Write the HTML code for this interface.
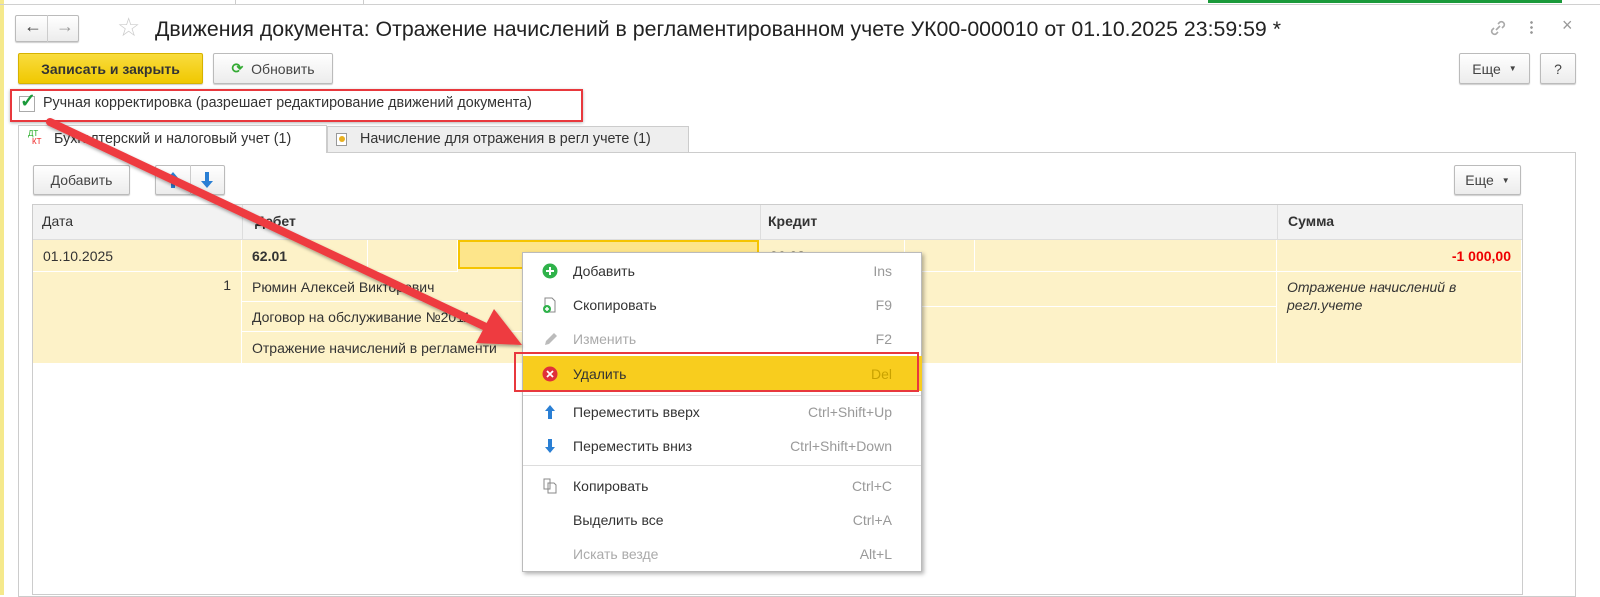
<!DOCTYPE html>
<html><head><meta charset="utf-8"><style>
*{box-sizing:border-box;margin:0;padding:0}
body{width:1600px;height:595px;background:#fff;font-family:"Liberation Sans",sans-serif;font-size:14px;color:#333;position:relative;overflow:hidden}
.a{position:absolute}
.btn{position:absolute;border:1px solid #bbb;border-radius:2px;background:linear-gradient(#fff,#ececec);box-shadow:0 1px 1px rgba(0,0,0,.2);font-size:14px;color:#444;display:flex;align-items:center;justify-content:center}
.cell{position:absolute;border-right:1px solid #fff;border-bottom:1px solid #fff;padding:0 10px;display:flex;align-items:center;font-size:14px;color:#333}
.mi{position:absolute;left:0;width:399px;height:34px;display:flex;align-items:center;font-size:14px;color:#333}
.mi .t{position:absolute;left:50px}
.mi .k{position:absolute;right:30px;color:#999}
.mi .ic{position:absolute;left:19px;width:16px;height:16px}
</style></head><body>
<div class="a" style="left:0;top:0;width:4px;height:595px;background:#f5e98c"></div>
<div class="a" style="left:0;top:4px;width:1600px;height:1px;background:#d0d0d0"></div>
<div class="a" style="left:235px;top:0;width:1px;height:4px;background:#ccc"></div>
<div class="a" style="left:363px;top:0;width:1px;height:4px;background:#ccc"></div>
<div class="a" style="left:1208px;top:0;width:354px;height:3px;background:#1a9a3a"></div>

<div class="btn" style="left:15px;top:15px;width:64px;height:27px"></div>
<div class="a" style="left:24px;top:16px;font-size:18px;color:#444">&larr;</div>
<div class="a" style="left:47px;top:15px;width:1px;height:27px;background:#ccc"></div>
<div class="a" style="left:56px;top:16px;font-size:18px;color:#999">&rarr;</div>
<div class="a" style="left:117px;top:12px;font-size:26px;color:#ccc">&#9734;</div>
<div class="a" style="left:155px;top:17px;font-size:21.3px;color:#222;white-space:nowrap">Движения документа: Отражение начислений в регламентированном учете УК00-000010 от 01.10.2025 23:59:59 *</div>
<svg class="a" style="left:1487px;top:17px" width="22" height="22" viewBox="0 0 22 22"><path d="M9 13l4-4M7 11l-2 2a3 3 0 004 4l2-2M15 11l2-2a3 3 0 00-4-4l-2 2" stroke="#aaa" stroke-width="1.6" fill="none"/></svg>
<div class="a" style="left:1530px;top:20px;width:3px;height:14px;background:radial-gradient(circle,#999 1.2px,transparent 1.5px) 0 0/3px 5px"></div>
<div class="a" style="left:1562px;top:15px;font-size:18px;color:#999">×</div>

<div class="btn" style="left:18px;top:53px;width:185px;height:31px;background:linear-gradient(#f9dc3e,#f0c800);border-color:#d6b200;font-weight:bold;color:#333">Записать и закрыть</div>
<div class="btn" style="left:213px;top:53px;width:120px;height:31px"><span style="color:#3a3;font-weight:bold;margin-right:8px">&#10227;</span>Обновить</div>
<div class="btn" style="left:1459px;top:53px;width:71px;height:31px">Еще <span style="font-size:8px;margin-left:8px">▼</span></div>
<div class="btn" style="left:1540px;top:53px;width:36px;height:31px">?</div>

<div class="a" style="left:10px;top:89px;width:573px;height:33px;border:2px solid #e8383d;box-shadow:0 1px 3px rgba(0,0,0,.3)"></div>
<div class="a" style="left:19px;top:96px;width:16px;height:16px;border:1px solid #aaa;background:#fff"></div>
<div class="a" style="left:20px;top:90px;font-size:19px;color:#1a9a3a;font-weight:bold">✓</div>
<div class="a" style="left:43px;top:95px;font-size:14.3px;color:#333">Ручная корректировка (разрешает редактирование движений документа)</div>

<div class="a" style="left:18px;top:152px;width:1558px;height:445px;border:1px solid #ccc"></div>
<div class="a" style="left:18px;top:125px;width:309px;height:28px;border:1px solid #ccc;border-bottom:none;background:#fff"></div>
<div class="a" style="left:28px;top:130px;font-size:8px;color:#2a2;line-height:8px">ДТ<br><span style="color:#e22;margin-left:4px">КТ</span></div>
<div class="a" style="left:54px;top:131px;font-size:14.3px">Бухгалтерский и налоговый учет (1)</div>
<div class="a" style="left:327px;top:126px;width:362px;height:27px;border:1px solid #ccc;background:#eee"></div>
<div class="a" style="left:336px;top:133px;width:11px;height:13px;border:1px solid #999;background:#fff"><div style="margin:2px;width:6px;height:6px;border-radius:50%;background:#e8b020"></div></div>
<div class="a" style="left:360px;top:131px;font-size:14.3px">Начисление для отражения в регл учете (1)</div>

<div class="btn" style="left:33px;top:165px;width:97px;height:30px">Добавить</div>
<div class="btn" style="left:155px;top:165px;width:70px;height:30px"></div>
<div class="a" style="left:190px;top:165px;width:1px;height:30px;background:#ccc"></div>
<svg class="a" style="left:166px;top:171px" width="14" height="18" viewBox="0 0 14 18"><path d="M7 1l6 7H9v9H5V8H1z" fill="#2a7fd4"/></svg>
<svg class="a" style="left:200px;top:171px" width="14" height="18" viewBox="0 0 14 18"><path d="M7 17l6-7H9V1H5v9H1z" fill="#2a7fd4"/></svg>
<div class="btn" style="left:1454px;top:165px;width:67px;height:30px">Еще <span style="font-size:8px;margin-left:8px">▼</span></div>

<div class="a" style="left:32px;top:204px;width:1491px;height:391px;border:1px solid #ccc"></div>
<div class="a" style="left:33px;top:205px;width:1489px;height:35px;background:#f2f2f2;border-bottom:1px solid #ddd"></div>
<div class="a" style="left:42px;top:213px">Дата</div>
<div class="a" style="left:242px;top:205px;width:1px;height:35px;background:#ddd"></div>
<div class="a" style="left:255px;top:213px;font-weight:bold">Дебет</div>
<div class="a" style="left:760px;top:205px;width:1px;height:35px;background:#ddd"></div>
<div class="a" style="left:768px;top:213px;font-weight:bold">Кредит</div>
<div class="a" style="left:1277px;top:205px;width:1px;height:35px;background:#ddd"></div>
<div class="a" style="left:1288px;top:213px;font-weight:bold">Сумма</div>

<div class="a" style="left:33px;top:240px;width:1489px;height:124px;background:#fdf2c8"></div>
<div class="cell" style="left:33px;top:240px;width:209px;height:32px">01.10.2025</div>
<div class="cell" style="left:33px;top:272px;width:209px;height:92px;align-items:flex-start;justify-content:flex-end;padding-top:5px">1</div>
<div class="cell" style="left:242px;top:240px;width:126px;height:32px;font-weight:bold">62.01</div>
<div class="cell" style="left:368px;top:240px;width:90px;height:32px"></div>
<div class="a" style="left:458px;top:240px;width:301px;height:29px;background:#fde58a;border:2px solid #f5c400"></div>
<div class="cell" style="left:242px;top:272px;width:518px;height:30px">Рюмин Алексей Викторович</div>
<div class="cell" style="left:242px;top:302px;width:518px;height:30px">Договор на обслуживание №2011</div>
<div class="cell" style="left:242px;top:332px;width:518px;height:32px">Отражение начислений в регламенти</div>
<div class="cell" style="left:760px;top:240px;width:145px;height:32px;font-weight:bold">96.03</div>
<div class="cell" style="left:905px;top:240px;width:70px;height:32px"></div>
<div class="cell" style="left:975px;top:240px;width:302px;height:32px"></div>
<div class="cell" style="left:760px;top:272px;width:517px;height:35px">Кудров</div>
<div class="cell" style="left:760px;top:307px;width:517px;height:57px"></div>
<div class="cell" style="left:1277px;top:240px;width:245px;height:32px;justify-content:flex-end;color:#e00;font-weight:bold">-1 000,00</div>
<div class="cell" style="left:1277px;top:272px;width:245px;height:92px;align-items:flex-start;padding-top:6px;font-style:italic;line-height:18px">Отражение начислений в регл.учете</div>

<div class="a" style="left:522px;top:252px;width:400px;height:320px;background:#fff;border:1px solid #bbb;box-shadow:2px 2px 4px rgba(0,0,0,.3)">
 <div class="mi" style="top:1px"><svg class="ic" viewBox="0 0 16 16"><circle cx="8" cy="8" r="7.5" fill="#2fb24a"/><path d="M8 4v8M4 8h8" stroke="#fff" stroke-width="2"/></svg><span class="t">Добавить</span><span class="k">Ins</span></div>
 <div class="mi" style="top:35px"><svg class="ic" viewBox="0 0 16 16"><path d="M3 1h7l3 3v11H3z" fill="#fff" stroke="#888"/><circle cx="5" cy="12" r="4" fill="#2fb24a"/><path d="M5 10v4M3 12h4" stroke="#fff" stroke-width="1.5"/></svg><span class="t">Скопировать</span><span class="k">F9</span></div>
 <div class="mi" style="top:69px;color:#aaa"><svg class="ic" viewBox="0 0 16 16"><path d="M3 14l1-4 8-8 3 3-8 8z" fill="#bbb"/></svg><span class="t">Изменить</span><span class="k">F2</span></div>
 <div class="mi" style="top:103px;height:35px;background:#f8cd1e"><svg class="ic" viewBox="0 0 16 16"><circle cx="8" cy="8" r="7.5" fill="#e0303a"/><path d="M5 5l6 6M11 5l-6 6" stroke="#fff" stroke-width="1.8"/></svg><span class="t">Удалить</span><span class="k" style="color:#c9a200">Del</span></div>
 <div class="a" style="left:0;top:142px;width:398px;height:1px;background:#ddd"></div>
 <div class="mi" style="top:142px"><svg class="ic" viewBox="0 0 16 16"><path d="M8 1l5 6H10v8H6V7H3z" fill="#2a7fd4"/></svg><span class="t">Переместить вверх</span><span class="k">Ctrl+Shift+Up</span></div>
 <div class="mi" style="top:176px"><svg class="ic" viewBox="0 0 16 16"><path d="M8 15l5-6H10V1H6v8H3z" fill="#2a7fd4"/></svg><span class="t">Переместить вниз</span><span class="k">Ctrl+Shift+Down</span></div>
 <div class="a" style="left:0;top:212px;width:398px;height:1px;background:#ddd"></div>
 <div class="mi" style="top:216px"><svg class="ic" viewBox="0 0 16 16"><path d="M2 1h6v10H2zM6 5h6l2 2v8H6z" fill="#fff" stroke="#888"/></svg><span class="t">Копировать</span><span class="k">Ctrl+C</span></div>
 <div class="mi" style="top:250px"><span class="t">Выделить все</span><span class="k">Ctrl+A</span></div>
 <div class="mi" style="top:284px;color:#aaa"><span class="t">Искать везде</span><span class="k">Alt+L</span></div>
</div>
<div class="a" style="left:514px;top:352px;width:405px;height:40px;border:2px solid #e8383d"></div>

<svg class="a" style="left:0;top:0" width="1600" height="595">
 <defs><filter id="s"><feDropShadow dx="1" dy="2" stdDeviation="1.5" flood-opacity=".35"/></filter></defs>
 <g filter="url(#s)">
 <line x1="50" y1="122" x2="488" y2="328" stroke="#ee3b40" stroke-width="8" stroke-linecap="round"/>
 <path d="M522 345L476 343L494 309Z" fill="#ee3b40"/>
 </g>
</svg>
</body></html>
